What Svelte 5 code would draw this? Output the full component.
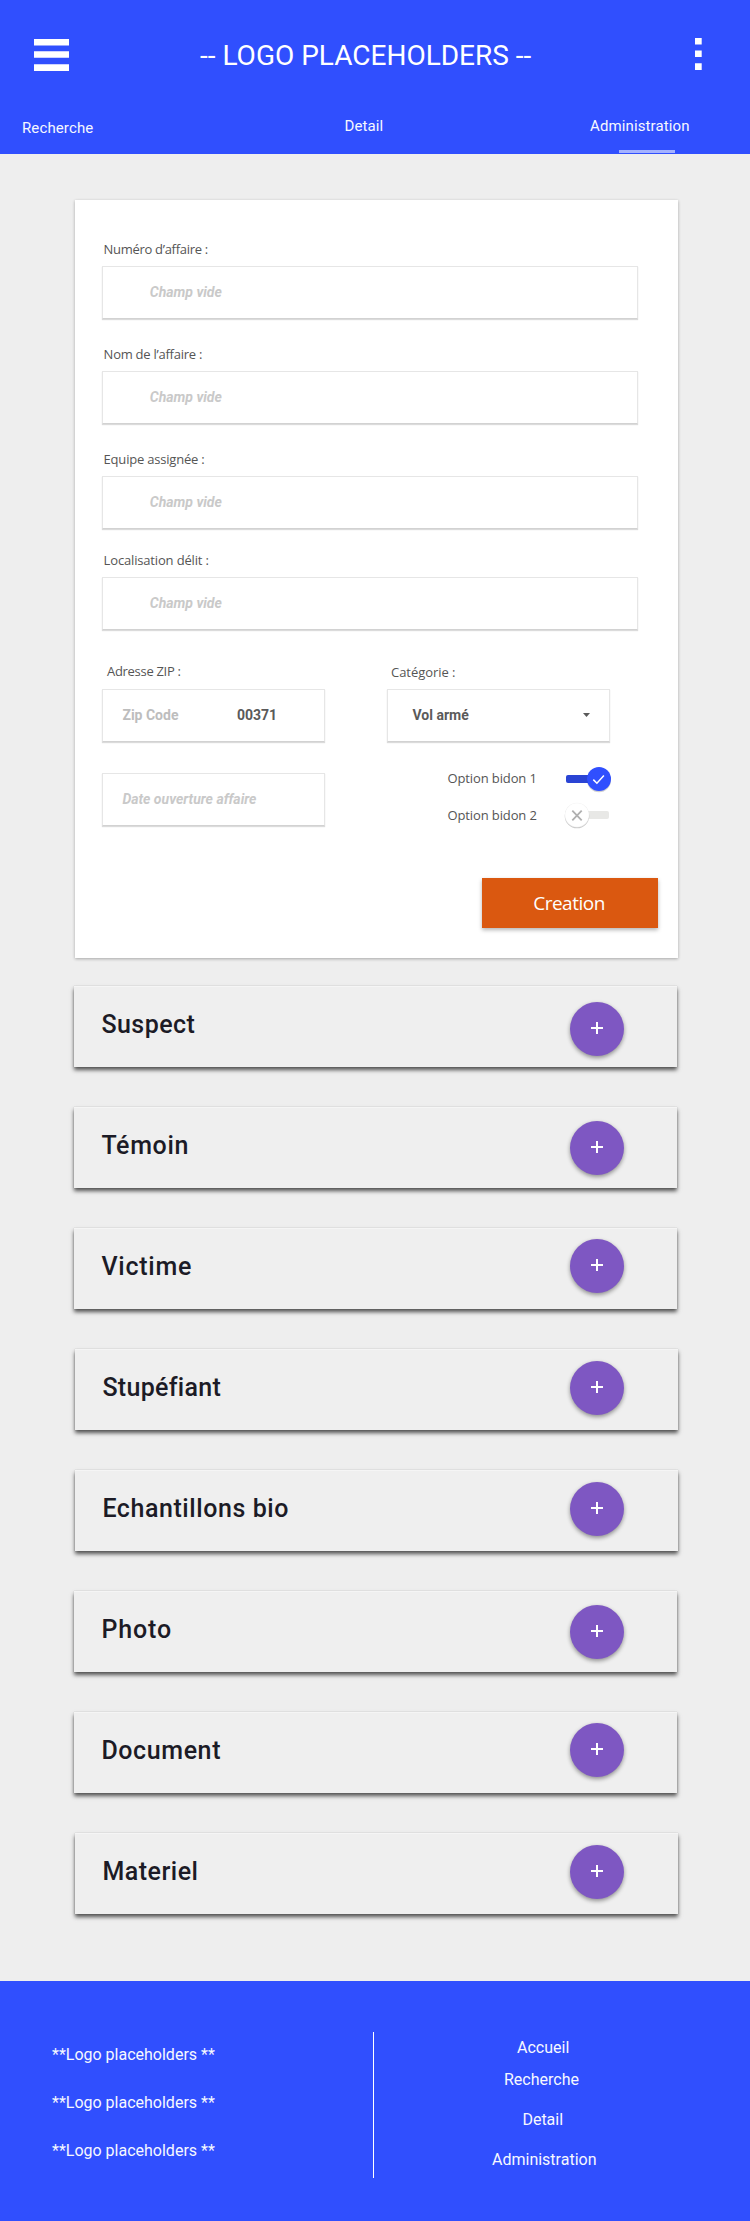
<script>
  const fields = [
    { label: 'Numéro d’affaire :', gap: 41, ls: -0.3 },
    { label: 'Nom de l’affaire :', gap: 27, ls: -0.25 },
    { label: 'Equipe assignée :', gap: 27, ls: -0.2 },
    { label: 'Localisation délit :', gap: 23, ls: -0.16 },
  ];
  const panels = [
    { name: 'Suspect', x: 74, drop: 16, ls: 0.45 },
    { name: 'Témoin', x: 74, drop: 14, ls: 0.65 },
    { name: 'Victime', x: 74, drop: 11, ls: 0.75 },
    { name: 'Stupéfiant', x: 75, drop: 12, ls: 0.3 },
    { name: 'Echantillons bio', x: 75, drop: 12, ls: 0.57 },
    { name: 'Photo', x: 74, drop: 14, ls: 0.9 },
    { name: 'Document', x: 74, drop: 11, ls: 0.6 },
    { name: 'Materiel', x: 75, drop: 12, ls: 0.5 },
  ];
</script>

<div class="page">
  <header>
    <div class="bar">
      <svg class="menu" width="35" height="32" viewBox="0 0 35 32" fill="#fff">
        <path d="M0 0h35v6.5H0zM0 12.3h35v6.5H0zM0 25.3h35v6.7H0z" />
      </svg>
      <h1>-- LOGO PLACEHOLDERS --</h1>
      <svg class="dots" width="7" height="32" viewBox="0 0 7 32" fill="#fff">
        <path d="M0 0h6.7v6.5H0zM0 12.5h6.7V19H0zM0 25.3h6.7V32H0z" />
      </svg>
    </div>
    <nav>
      <a class="t1" href="#recherche">Recherche</a>
      <a class="t2" href="#detail">Detail</a>
      <a class="t3" href="#administration">Administration</a>
    </nav>
    <div class="marker"></div>
  </header>

  <form class="card">
    {#each fields as f}
      <div class="group" style="padding-top: {f.gap}px">
        <div class="label"><span style="letter-spacing: {f.ls}px">{f.label}</span></div>
        <div class="field"><i>Champ vide</i></div>
      </div>
    {/each}

    <div class="split">
      <div class="col">
        <div class="label zip">Adresse ZIP :</div>
        <div class="field small"><b class="muted">Zip Code</b><b class="value">00371</b></div>
        <div class="field small date"><i>Date ouverture affaire</i></div>
      </div>
      <div class="col">
        <div class="label cat">Catégorie :</div>
        <div class="field select">
          <b>Vol armé</b>
          <svg width="7" height="4" viewBox="0 0 7 4"><path d="M0 0h7L3.5 4z" fill="#5a5a5a" /></svg>
        </div>
        <div class="option first">
          <span>Option bidon 1</span>
          <svg width="52" height="32" viewBox="0 0 52 32">
            <rect x="4" y="12" width="40" height="8" rx="2" fill="#2a44d4" />
            <circle cx="37" cy="17.2" r="12" fill="#000" opacity=".18" />
            <circle cx="37" cy="16" r="12" fill="#304ffe" />
            <path d="M31.3 16.6l3.6 3.6 7-7.8" fill="none" stroke="#fff" stroke-width="1.5" />
          </svg>
        </div>
        <div class="option second">
          <span>Option bidon 2</span>
          <svg width="52" height="32" viewBox="0 0 52 32">
            <rect x="8" y="12" width="39" height="8" rx="2" fill="#e8e8e6" />
            <circle cx="15" cy="17" r="12.3" fill="#000" opacity=".2" />
            <circle cx="15" cy="16" r="12.2" fill="#f2f2f2" />
            <circle cx="15" cy="16" r="11.7" fill="#fff" />
            <path d="M10.3 11.6l9.4 9.8M19.7 11.6l-9.4 9.8" stroke="#b0b0b0" stroke-width="1.8" />
          </svg>
        </div>
      </div>
    </div>
    <button type="button">Creation</button>
  </form>

  <section>
    {#each panels as p}
      <article style="margin-left: {p.x}px">
        <h2 style="letter-spacing: {p.ls}px">{p.name}</h2>
        <div class="add" style="margin-top: {p.drop}px; margin-right: {p.x - 21}px">
          <svg width="12" height="12" viewBox="0 0 12 12"><path d="M5 0h2v5h5v2H7v5H5V7H0V5h5z" fill="#fff" /></svg>
        </div>
      </article>
    {/each}
  </section>

  <footer>
    <div class="logos">
      <span>**Logo placeholders **</span>
      <span>**Logo placeholders **</span>
      <span>**Logo placeholders **</span>
    </div>
    <div class="rule"></div>
    <div class="links">
      <a class="l1" href="#accueil">Accueil</a>
      <a class="l2" href="#recherche">Recherche</a>
      <a class="l3" href="#detail">Detail</a>
      <a class="l4" href="#administration">Administration</a>
    </div>
  </footer>
</div>

<style>
  :global(body) { margin: 0; }
  .page {
    width: 750px;
    height: 2221px;
    display: flex;
    flex-direction: column;
    background: #eee;
    font-family: Roboto, "Liberation Sans", sans-serif;
  }
  a { color: inherit; text-decoration: none; }
  svg { display: block; flex: none; }

  header {
    height: 154px;
    background: #304ffe;
    color: #fff;
    display: flex;
    flex-direction: column;
    box-sizing: border-box;
    padding-top: 35px;
  }
  .bar { display: flex; height: 40px; padding: 0 48px 0 34px; }
  .menu { margin-top: 4px; }
  .dots { margin-top: 3px; }
  h1 { margin: 0; flex: 1; padding: 1px 0 0 131px; font-size: 28px; line-height: 40px; font-weight: 400; white-space: nowrap; }
  nav { display: flex; height: 75px; font-size: 15px; line-height: 20px; letter-spacing: .12px; color: #f6f8ff; }
  .t1 { margin: 43px 0 0 22px; width: 322.5px; }
  .t2 { margin-top: 41px; width: 245.5px; }
  .t3 { margin-top: 41px; }
  .marker { width: 56px; height: 3px; margin-left: 619px; background: #a4b2ff; flex: none; }

  .card {
    margin: 46px 72px 0 75px;
    height: 758px;
    display: flex;
    flex-direction: column;
    background: #fff;
    box-shadow: 0 1px 3px rgba(0, 0, 0, .3);
  }
  .label, .option {
    font-family: "Open Sans", "Noto Sans", sans-serif;
    font-size: 13px;
    line-height: 16px;
    color: #555;
  }
  .label { padding-left: 28.6px; white-space: nowrap; }
  .group { flex: none; }
  .field {
    box-sizing: border-box;
    width: 536px;
    height: 53px;
    margin: 9px 0 0 27px;
    padding-left: 46.8px;
    display: flex;
    align-items: center;
    background: #fff;
    border: 1px solid #e6e6e6;
    border-bottom-color: #d2d2d2;
    box-shadow: 0 1px 1px rgba(0, 0, 0, .14);
    font-size: 14px;
    line-height: 16px;
    padding-bottom: 2px;
    color: #5a5a5a;
  }
  i { font-weight: 700; font-style: italic; color: #c9c9c9; }
  b { font-weight: 700; }
  .muted { color: #bdbdbd; }
  .split { display: flex; padding-top: 33px; }
  .col { width: 285px; }
  .split .field { width: 223px; margin-top: 10px; padding-left: 19.4px; }
  .split .zip { padding-left: 32px; letter-spacing: -.3px; }
  .split .cat { padding: 1px 0 0 31px; letter-spacing: -.05px; }
  .split .cat + .field { margin-top: 9px; padding-left: 24.5px; }
  .split .date { margin-top: 31px; }
  .small .value { margin-left: 58.5px; }
  .select svg { margin: 1px 19px 0 auto; }
  .option { display: flex; align-items: center; height: 32px; padding-left: 87.5px; letter-spacing: -.12px; }
  .option span { width: 114.5px; }
  .first { margin-top: 21px; }
  .first span { padding-bottom: 2px; }
  .second { margin-top: 4px; }
  button {
    width: 176px;
    height: 50px;
    margin: 47px 20px 0 auto;
    padding: 0 2px 0 0;
    border: 0;
    background: #da5810;
    color: #fff;
    font: 19px/24px "Open Sans", "Noto Sans", sans-serif;
    letter-spacing: -.5px;
    box-shadow: 0 2px 4px rgba(0, 0, 0, .3);
  }

  section { padding-top: 28px; display: flex; flex-direction: column; gap: 40px; }
  article {
    width: 603px;
    height: 81px;
    display: flex;
    justify-content: space-between;
    box-shadow: 0 3px 4px rgba(0, 0, 0, .65), 0 0 1px rgba(0, 0, 0, .2), inset 0 1px 0 #f5f5f5;
    background: #efefef;
  }
  h2 {
    margin: 0;
    padding: 23px 0 0 27.4px;
    font-size: 25px;
    line-height: 32px;
    font-weight: 500;
    color: #1c1b26;
  }
  .add {
    width: 54px;
    height: 54px;
    border-radius: 50%;
    background: #7e57c2;
    box-shadow: 0 2px 4px rgba(0, 0, 0, .4);
    display: flex;
    justify-content: center;
    box-sizing: border-box;
    padding-top: 20px;
  }

  footer {
    margin-top: auto;
    height: 240px;
    display: flex;
    background: #304ffe;
    color: #f6f8ff;
    font-size: 16px;
    line-height: 20px;
  }
  .logos { width: 321px; padding: 64px 0 0 52px; display: flex; flex-direction: column; gap: 28px; }
  .rule { width: 1px; height: 146px; margin-top: 51px; background: #fff; }
  .links { display: flex; flex-direction: column; padding-left: 118px; align-items: flex-start; }
  .l1 { margin: 57px 0 0 25px; }
  .l2 { margin: 12px 0 0 12px; }
  .l3 { margin: 20px 0 0 30.4px; }
  .l4 { margin: 20px 0 0 0; }
</style>
